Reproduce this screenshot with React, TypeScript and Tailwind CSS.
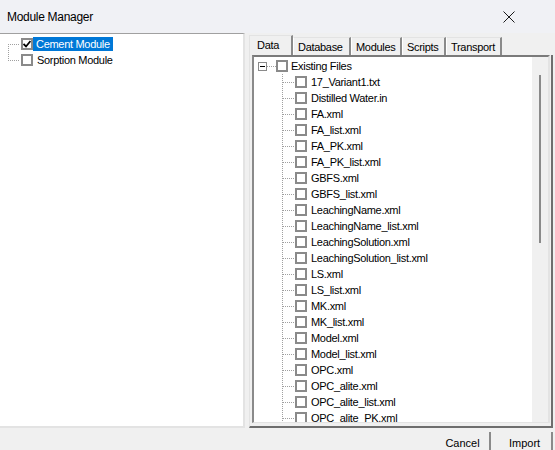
import React from 'react';

const files = [
  '17_Variant1.txt',
  'Distilled Water.in',
  'FA.xml',
  'FA_list.xml',
  'FA_PK.xml',
  'FA_PK_list.xml',
  'GBFS.xml',
  'GBFS_list.xml',
  'LeachingName.xml',
  'LeachingName_list.xml',
  'LeachingSolution.xml',
  'LeachingSolution_list.xml',
  'LS.xml',
  'LS_list.xml',
  'MK.xml',
  'MK_list.xml',
  'Model.xml',
  'Model_list.xml',
  'OPC.xml',
  'OPC_alite.xml',
  'OPC_alite_list.xml',
  'OPC_alite_PK.xml',
];

const tabs = [
  { label: 'Data', w: 'w-[44px]', active: true },
  { label: 'Database', w: 'w-[58px]', active: false },
  { label: 'Modules', w: 'w-[51px]', active: false },
  { label: 'Scripts', w: 'w-[44px]', active: false },
  { label: 'Transport', w: 'w-[56px]', active: false },
];

const dot = '#a0a0a0';

const CheckBox: React.FC<{ checked?: boolean }> = ({ checked }) => (
  <div className="w-[12px] h-[12px] border-2 border-[#8a8a8a] bg-white flex items-center justify-center shrink-0">
    {checked && (
      <svg width="8" height="8" viewBox="0 0 8 8">
        <path d="M0.5 4 L3 6.5 L7.5 1" stroke="#000" strokeWidth="1.8" fill="none" />
      </svg>
    )}
  </div>
);

const App: React.FC = () => {
  return (
    <div
      className="w-[555px] h-[450px] bg-[#f0f0f0] flex flex-col overflow-hidden text-black"
      style={{ fontFamily: '"Liberation Sans", Arial, sans-serif' }}
    >
      {/* Title bar */}
      <div className="h-[33px] bg-[#f0f1f5] flex items-center justify-between pl-[7px] pr-[40px] shrink-0">
        <span className="text-[12px] tracking-[-0.3px]">Module Manager</span>
        <svg width="12" height="12" viewBox="0 0 12 12">
          <path d="M0.5 0.5 L11.5 11.5 M11.5 0.5 L0.5 11.5" stroke="#1a1a1a" strokeWidth="1" />
        </svg>
      </div>

      <div className="flex h-[395px] shrink-0 text-[11px] tracking-[-0.3px]">
        {/* Left module tree */}
        <div className="w-[245px] bg-white border-t border-t-[#a0a0a0] border-r-2 border-r-[#e3e3e3] border-b-2 border-b-[#e3e3e3] pt-[2px]">
          <div className="flex items-center h-[16px]">
            <svg width="20" height="16" className="shrink-0">
              <line x1="8.5" y1="8" x2="8.5" y2="16" stroke={dot} strokeDasharray="1 1" shapeRendering="crispEdges" />
              <line x1="8" y1="8.5" x2="20" y2="8.5" stroke={dot} strokeDasharray="1 1" shapeRendering="crispEdges" />
            </svg>
            <div className="ml-[1px]">
              <CheckBox checked />
            </div>
            <span className="bg-[#0078d7] text-white h-[14px] leading-[14px] px-[3px]">Cement Module</span>
          </div>
          <div className="flex items-center h-[16px]">
            <svg width="20" height="16" className="shrink-0">
              <line x1="8.5" y1="0" x2="8.5" y2="8" stroke={dot} strokeDasharray="1 1" shapeRendering="crispEdges" />
              <line x1="8" y1="8.5" x2="20" y2="8.5" stroke={dot} strokeDasharray="1 1" shapeRendering="crispEdges" />
            </svg>
            <div className="ml-[1px]">
              <CheckBox />
            </div>
            <span className="pl-[4px]">Sorption Module</span>
          </div>
        </div>

        {/* Right tabbed panel */}
        <div className="ml-[4px] w-[304px] flex flex-col">
          <div className="flex items-end h-[22px] shrink-0">
            {tabs.map((t) => (
              <div
                key={t.label}
                className={`${t.w} ${
                  t.active ? 'h-[20px] pl-[7px] pt-[2px] border-l border-l-[#e3e3e3]' : 'h-[18px] pl-[4px] pt-[2px] border-l border-l-white'
                } border-t border-t-[#e3e3e3] border-r-2 border-r-[#8a8a8a] bg-[#f0f0f0] leading-[14px]`}
              >
                {t.label}
              </div>
            ))}
          </div>

          <div className="flex-1 flex flex-col border-l border-l-[#e3e3e3] border-r-2 border-r-[#6e6e6e] border-b-2 border-b-[#6e6e6e] pl-[2px] pr-[1px] pb-[3px] min-h-0">
            <div className="flex-1 flex border-t-2 border-t-[#7a7a7a] border-l-2 border-l-[#8a8a8a] border-r-2 border-r-[#e3e3e3] border-b border-b-[#e3e3e3] bg-white min-h-0">
              <div className="flex-1 overflow-hidden pt-[1px]">
                <div className="flex items-center h-[16px]">
                  <svg width="22" height="16" className="shrink-0">
                    <rect x="4.5" y="4.5" width="8" height="8" fill="#fff" stroke="#8a8a8a" shapeRendering="crispEdges" />
                    <line x1="6" y1="8.5" x2="11" y2="8.5" stroke="#000" shapeRendering="crispEdges" />
                    <line x1="13" y1="8.5" x2="22" y2="8.5" stroke={dot} strokeDasharray="1 1" shapeRendering="crispEdges" />
                  </svg>
                  <CheckBox />
                  <span className="pl-[3px]">Existing Files</span>
                </div>
                {files.map((f) => (
                  <div key={f} className="flex items-center h-[16px]">
                    <svg width="40" height="16" className="shrink-0">
                      <line x1="28.5" y1="0" x2="28.5" y2="16" stroke={dot} strokeDasharray="1 1" shapeRendering="crispEdges" />
                      <line x1="29" y1="8.5" x2="40" y2="8.5" stroke={dot} strokeDasharray="1 1" shapeRendering="crispEdges" />
                    </svg>
                    <div className="ml-[1px]">
                      <CheckBox />
                    </div>
                    <span className="pl-[4px] whitespace-nowrap">{f}</span>
                  </div>
                ))}
              </div>
              <div className="w-[16px] bg-[#f0f0f0] shrink-0 pt-[18px] pl-[7px]">
                <div className="w-[2px] h-[168px] bg-[#8a8a8a]" />
              </div>
            </div>
          </div>
        </div>
      </div>

      {/* Buttons */}
      <div className="flex-1 flex justify-end items-start pt-[4px] pr-[2px] text-[11px]">
        <div className="w-[55px] h-[24px] border-r-2 border-r-[#8a8a8a] text-center pt-[4px] leading-[14px]">Cancel</div>
        <div className="w-[61px] h-[24px] ml-[1px] border-r-2 border-r-[#8a8a8a] pl-[17px] pt-[4px] leading-[14px]">Import</div>
      </div>
    </div>
  );
};

export default App;
